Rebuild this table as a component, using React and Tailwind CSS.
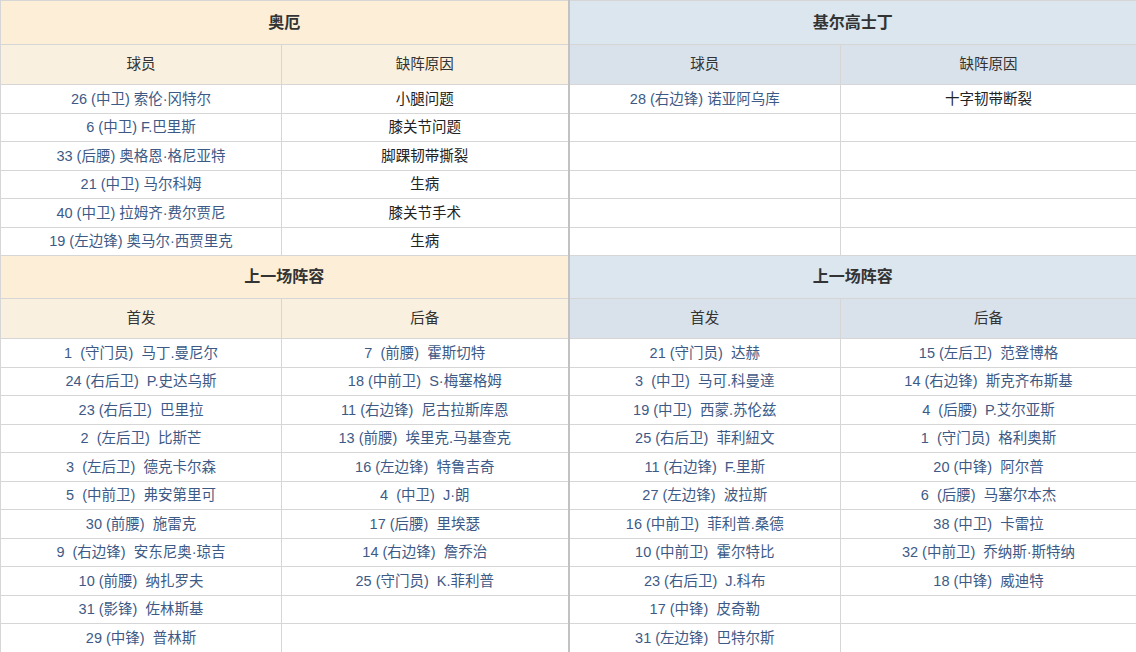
import React from "react";

const injL = [
  ["26 (中卫) 索伦·冈特尔", "小腿问题"],
  ["6 (中卫) F.巴里斯", "膝关节问题"],
  ["33 (后腰) 奥格恩·格尼亚特", "脚踝韧带撕裂"],
  ["21 (中卫) 马尔科姆", "生病"],
  ["40 (中卫) 拉姆齐·费尔贾尼", "膝关节手术"],
  ["19 (左边锋) 奥马尔·西贾里克", "生病"],
];
const injR = [["28 (右边锋) 诺亚阿乌库", "十字韧带断裂"], ["", ""], ["", ""], ["", ""], ["", ""], ["", ""]];

const N = "\u00a0";
const p = (n, pos, name) => (n < 10 ? `${n}${N} (${pos})${N} ${name}` : `${n} (${pos})${N} ${name}`);

const lStart = [
  p(1, "守门员", "马丁.曼尼尔"),
  p(24, "右后卫", "P.史达乌斯"),
  p(23, "右后卫", "巴里拉"),
  p(2, "左后卫", "比斯芒"),
  p(3, "左后卫", "德克卡尔森"),
  p(5, "中前卫", "弗安第里可"),
  p(30, "前腰", "施雷克"),
  p(9, "右边锋", "安东尼奥·琼吉"),
  p(10, "前腰", "纳扎罗夫"),
  p(31, "影锋", "佐林斯基"),
  p(29, "中锋", "普林斯"),
];
const lSub = [
  p(7, "前腰", "霍斯切特"),
  p(18, "中前卫", "S·梅塞格姆"),
  p(11, "右边锋", "尼古拉斯库恩"),
  p(13, "前腰", "埃里克.马基查克"),
  p(16, "左边锋", "特鲁吉奇"),
  p(4, "中卫", "J·朗"),
  p(17, "后腰", "里埃瑟"),
  p(14, "右边锋", "詹乔治"),
  p(25, "守门员", "K.菲利普"),
  "",
  "",
];
const rStart = [
  p(21, "守门员", "达赫"),
  p(3, "中卫", "马可.科曼達"),
  p(19, "中卫", "西蒙.苏伦兹"),
  p(25, "右后卫", "菲利紐文"),
  p(11, "右边锋", "F.里斯"),
  p(27, "左边锋", "波拉斯"),
  p(16, "中前卫", "菲利普.桑德"),
  p(10, "中前卫", "霍尔特比"),
  p(23, "右后卫", "J.科布"),
  p(17, "中锋", "皮奇勒"),
  p(31, "左边锋", "巴特尔斯"),
];
const rSub = [
  p(15, "左后卫", "范登博格"),
  p(14, "右边锋", "斯克齐布斯基"),
  p(4, "后腰", "P.艾尔亚斯"),
  p(1, "守门员", "格利奥斯"),
  p(20, "中锋", "阿尔普"),
  p(6, "后腰", "马塞尔本杰"),
  p(38, "中卫", "卡雷拉"),
  p(32, "中前卫", "乔纳斯·斯特纳"),
  p(18, "中锋", "威迪特"),
  "",
  "",
];

const bd = "border border-[#d6d6d6]";
const mid = "border-l-2 border-l-[#c2c2c2]";
const blue = "text-[#3d5a86]";
const dark = "text-[#333333]";

function TitleRow({ left, right, h }) {
  return (
    <tr className={h}>
      <td colSpan={2} className={`${bd} bg-[#fdefd7] text-center font-bold text-[16px] ${dark}`}>{left}</td>
      <td colSpan={2} className={`${bd} ${mid} bg-[#dce6ee] text-center font-bold text-[16px] ${dark}`}>{right}</td>
    </tr>
  );
}

function SubRow({ a, b }) {
  return (
    <tr className="h-[40px]">
      <td className={`${bd} bg-[#f9f0df] text-center ${dark}`}>{a}</td>
      <td className={`${bd} bg-[#f9f0df] text-center ${dark}`}>{b}</td>
      <td className={`${bd} ${mid} bg-[#d9e2eb] text-center ${dark}`}>{a}</td>
      <td className={`${bd} bg-[#d9e2eb] text-center ${dark}`}>{b}</td>
    </tr>
  );
}

export default function App() {
  return (
    <div
      className="w-[1136px] h-[652px] overflow-hidden bg-white text-[14.5px] leading-none"
      style={{ fontFamily: '"Liberation Sans", "Noto Sans CJK SC", sans-serif' }}
    >
      <table className="w-[1136px] table-fixed border-collapse">
        <colgroup>
          <col className="w-[281px]" />
          <col className="w-[287px]" />
          <col className="w-[272px]" />
          <col className="w-[296px]" />
        </colgroup>
        <tbody>
          <TitleRow left="奥厄" right="基尔高士丁" h="h-[44px]" />
          <SubRow a="球员" b="缺阵原因" />
          {injL.map((r, i) => (
            <tr key={i} className="h-[28.5px]">
              <td className={`${bd} text-center ${blue}`}>{r[0]}</td>
              <td className={`${bd} text-center text-[#222]`}>{r[1]}</td>
              <td className={`${bd} ${mid} text-center ${blue}`}>{injR[i][0]}</td>
              <td className={`${bd} text-center text-[#222]`}>{injR[i][1]}</td>
            </tr>
          ))}
          <TitleRow left="上一场阵容" right="上一场阵容" h="h-[43px]" />
          <SubRow a="首发" b="后备" />
          {lStart.map((s, i) => (
            <tr key={i} className="h-[28.5px]">
              <td className={`${bd} text-center ${blue} whitespace-pre`}>{s}</td>
              <td className={`${bd} text-center ${blue} whitespace-pre`}>{lSub[i]}</td>
              <td className={`${bd} ${mid} text-center ${blue} whitespace-pre`}>{rStart[i]}</td>
              <td className={`${bd} text-center ${blue} whitespace-pre`}>{rSub[i]}</td>
            </tr>
          ))}
        </tbody>
      </table>
    </div>
  );
}
